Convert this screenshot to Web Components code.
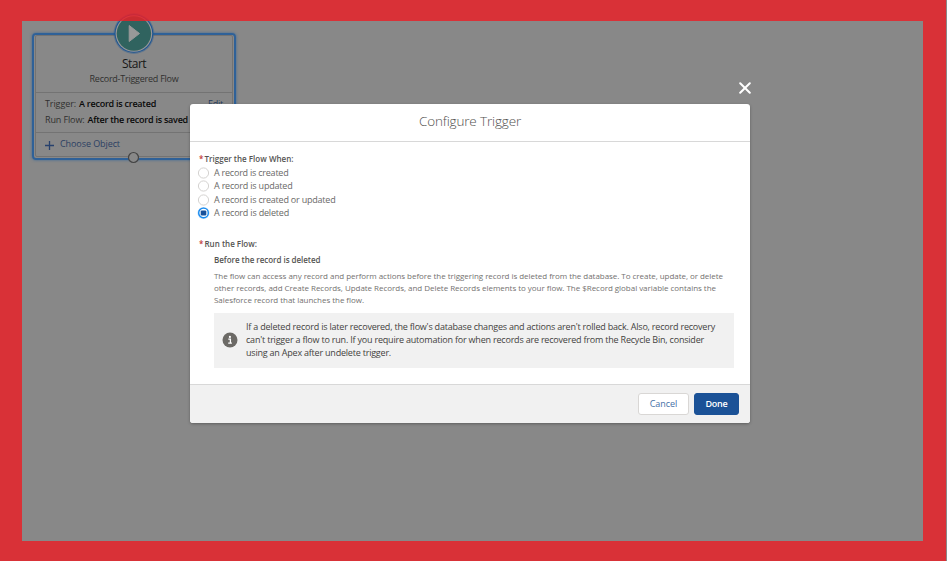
<!DOCTYPE html>
<html lang="en"><head><meta charset="utf-8"><title>Configure Trigger</title>
<style>html,body{margin:0;height:561px;overflow:hidden;background:#888}</style></head>
<body><flow-builder></flow-builder>
<script>
/* One line of text, tracked so that it fills the width given in pixels. */
class TextLine extends HTMLElement{
  constructor(){super();this.attachShadow({mode:'open'}).innerHTML='<style>:host{display:block;white-space:nowrap;flex:none}span{display:inline-block}</style><span><slot></slot></span>'}
  connectedCallback(){
    const w=+this.getAttribute('w');this.style.width=w+'px';
    const s=this.shadowRoot.querySelector('span');
    s.style.letterSpacing='0';
    const n=this.textContent.length;
    s.style.letterSpacing=((w-s.getBoundingClientRect().width)/n)+'px';
  }
}
class StartNode extends HTMLElement{
  constructor(){super();this.attachShadow({mode:'open'}).innerHTML=`
<style>
:host{display:block;box-sizing:border-box;width:204px;height:127px;border:2px solid #2f6198;border-radius:4px;box-shadow:0 0 3px #3b6998;font-size:9px;color:#30302f;padding:0 1px 1px}
.card{box-sizing:border-box;height:122px;border:1px solid #737373;border-radius:2px;display:flex;flex-direction:column}
.head{height:57px;box-sizing:border-box;padding-top:19px;display:flex;flex-direction:column;align-items:center;border-bottom:1px solid #737373}
.title{font-size:12px;line-height:17px;color:#171717}.sub{line-height:13px}
.rows{height:40px;box-sizing:border-box;padding:3px 9px 0;border-bottom:1px solid #737373}
.row{display:flex;gap:3px;height:16px;line-height:16px}.edit{margin-left:auto;color:#273a5b}
.b{font-weight:600;color:#080808}
.add{display:flex;align-items:center;gap:6px;padding:0 9px;height:22px;color:#2b3f63;line-height:20px}
.add svg{margin-top:3px}
.play,.port{position:absolute;display:block}.play{left:77px;top:-25px}.port{left:93px;top:116px}
</style>
<div class="card"><div class="head"><text-line class="title" w="24">Start</text-line><text-line class="sub" w="89">Record-Triggered Flow</text-line></div>
<div class="rows"><div class="row"><text-line w="31">Trigger:</text-line><text-line class="b" w="77">A record is created</text-line><text-line class="edit" w="15">Edit</text-line></div>
<div class="row"><text-line w="39.5">Run Flow:</text-line><text-line class="b" w="100.5">After the record is saved</text-line></div></div>
<div class="add"><svg width="9" height="9"><path d="M4.5 0v9M0 4.5h9" stroke="#27416d" stroke-width="1.3"/></svg><text-line w="60">Choose Object</text-line></div></div>
<svg class="play" width="46" height="48"><circle cx="22.9" cy="23.5" r="20.4" fill="#245b96" opacity=".4"/><circle cx="22.9" cy="23.5" r="19.3" fill="#1f5590"/><circle cx="22.9" cy="23.5" r="18.3" fill="#989898"/><circle cx="22.9" cy="23.5" r="17.2" fill="#30635f"/><path d="M18.2 15.5v16l10.3-8z" fill="#999" stroke="#999" stroke-linejoin="round"/></svg>
<svg class="port" width="13" height="13"><circle cx="6.5" cy="6.5" r="5" fill="#888" stroke="#444" stroke-width="1.2"/></svg>`}
}
class RadioOption extends HTMLElement{
  constructor(){super();this.attachShadow({mode:'open'}).innerHTML=`
<style>:host{display:flex;align-items:center;gap:5px;height:13.3px;line-height:13px;color:#6a6967}svg{flex:none;overflow:visible}.on{display:none}:host([checked]) .on{display:block}:host([checked]) .off{display:none}</style>
<svg width="11" height="11"><circle class="off" cx="5.5" cy="6" r="5.1" fill="#fff" stroke="#d5d3d1"/><g class="on"><circle cx="5.5" cy="5.9" r="6" fill="#1589ee" opacity=".3"/><circle cx="5.5" cy="5.9" r="4.8" fill="#fff" stroke="#1589ee" stroke-width="1.4"/><rect x="2.7" y="3.4" width="5.6" height="5" rx="1.2" fill="#17509a"/></g></svg><slot></slot>`}
}
class UiButton extends HTMLElement{
  constructor(){super();this.attachShadow({mode:'open'}).innerHTML=`
<style>:host{box-sizing:border-box;display:flex;justify-content:center;height:22px;line-height:20px;border:1px solid #d9d7d5;border-radius:3px;background:#fff;color:#4670a7;width:51px}
:host([primary]){width:45px;background:#1b5297;border-color:#1b5297;color:#fff}</style><slot></slot>`}
}
class InfoNote extends HTMLElement{
  constructor(){super();this.attachShadow({mode:'open'}).innerHTML=`
<style>:host{box-sizing:border-box;display:flex;gap:8px;align-items:center;margin:7px 16px 0 16px;height:55px;padding:0 8px 1px;background:#f1f1f1;color:#434240;line-height:13px}svg{flex:none}div{padding-bottom:2px}</style>
<svg width="16" height="16"><circle cx="8" cy="8" r="7.5" fill="#6c6a66"/><circle cx="7.9" cy="4.9" r="1.1" fill="#fff"/><path d="M6.3 7.2h2.1v3.6M6.2 11.2h3.7" fill="none" stroke="#fff" stroke-width="1.3"/></svg><div><slot></slot></div>`}
}
class ModalDialog extends HTMLElement{
  constructor(){super();this.attachShadow({mode:'open'}).innerHTML=`
<style>:host{box-sizing:border-box;display:grid;grid-template-rows:38px 242px 39px;width:560px;height:319px;background:#fff;border-radius:3px;box-shadow:0 1px 3px rgba(0,0,0,.3)}
header{border-bottom:1px solid #d8d8d8;display:flex;justify-content:center;font-size:13.5px;font-weight:300;line-height:35px;color:#51504e;box-sizing:border-box}
main{padding:10px 0 0 8px;box-sizing:border-box}
footer{box-sizing:border-box;border-top:1px solid #d8d8d8;background:#f1f1f1;border-radius:0 0 3px 3px;display:flex;justify-content:flex-end;gap:5px;padding:8px 11px}
.close{position:absolute;left:549px;top:-22px}</style>
<header><slot name="title"></slot></header><main><slot></slot></main><footer><slot name="actions"></slot></footer>
<svg class="close" width="12" height="12"><path d="M1.2 1.2l9.6 9.6M10.8 1.2l-9.6 9.6" stroke="#fff" stroke-width="2" stroke-linecap="round"/></svg>`}
}
class FlowBuilder extends HTMLElement{
  constructor(){super();this.attachShadow({mode:'open'}).innerHTML=`
<style>
:host{display:block;position:relative;width:947px;height:561px;background:#888;overflow:hidden;font:9px "Open Sans","Noto Sans",sans-serif}
start-node{position:absolute;left:32px;top:33px}
.frame{position:absolute;left:0;top:0;width:946px;height:561px;box-sizing:border-box;border:solid rgba(236,30,38,.82);border-width:21px 23px 20px 22px}
modal-dialog{position:absolute;left:190px;top:104px}
.label{display:flex;gap:2px;height:13px;line-height:13px;font-size:8px;font-weight:600;color:#555452;padding-left:1px}
.label i{font-style:normal;color:#c23934;width:3.5px}
.second{margin-top:18px}
.when{font-size:8px;font-weight:600;color:#555452;line-height:13px;margin:3px 0 0 16px}
.desc{margin:4px 0 0 16px;line-height:12px;font-size:8px;color:#73716f}
.options{margin-top:1px}
.done{font-weight:600}
</style>
<start-node></start-node>
<div class="frame"></div>
<modal-dialog>
<text-line slot="title" w="102">Configure Trigger</text-line>
<div class="label"><i>*</i><text-line w="89">Trigger the Flow When:</text-line></div>
<div class="options"><radio-option><text-line w="74.5">A record is created</text-line></radio-option>
<radio-option><text-line w="78.5">A record is updated</text-line></radio-option>
<radio-option><text-line w="121.5">A record is created or updated</text-line></radio-option>
<radio-option checked><text-line w="75">A record is deleted</text-line></radio-option></div>
<div class="label second"><i>*</i><text-line w="52.5">Run the Flow:</text-line></div>
<div class="when"><text-line w="106.5">Before the record is deleted</text-line></div>
<div class="desc"><text-line w="509">The flow can access any record and perform actions before the triggering record is deleted from the database. To create, update, or delete</text-line>
<text-line w="502">other records, add Create Records, Update Records, and Delete Records elements to your flow. The $Record global variable contains the</text-line>
<text-line w="150">Salesforce record that launches the flow.</text-line></div>
<info-note><text-line w="469">If a deleted record is later recovered, the flow's database changes and actions aren't rolled back. Also, record recovery</text-line>
<text-line w="458">can't trigger a flow to run. If you require automation for when records are recovered from the Recycle Bin, consider</text-line>
<text-line w="145">using an Apex after undelete trigger.</text-line></info-note>
<ui-button slot="actions"><text-line w="27.5">Cancel</text-line></ui-button>
<ui-button slot="actions" primary><text-line class="done" w="22">Done</text-line></ui-button>
</modal-dialog>`}
}
for(const [n,c] of [['text-line',TextLine],['start-node',StartNode],['radio-option',RadioOption],['ui-button',UiButton],['info-note',InfoNote],['modal-dialog',ModalDialog],['flow-builder',FlowBuilder]])customElements.define(n,c);
</script></body></html>
